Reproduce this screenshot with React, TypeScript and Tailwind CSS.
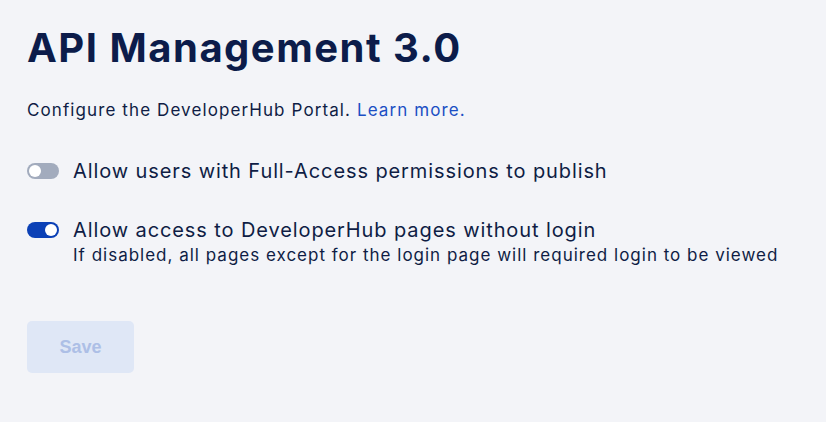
import React from "react";

function Toggle({ on }: { on: boolean }) {
  return (
    <div
      className={`relative h-4 w-8 shrink-0 rounded-full ${on ? "bg-[#0b40b6]" : "bg-[#a2abbd]"}`}
    >
      <div
        className={`absolute top-[2px] h-3 w-3 rounded-full bg-white ${on ? "left-[18px]" : "left-[2px]"}`}
      />
    </div>
  );
}

export default function App() {
  return (
    <div
      className="min-h-[422px] w-full bg-[#f3f4f8] pl-[27px] pt-[22px] text-[#0f1d45]"
      style={{ fontFamily: "Inter, 'Noto Sans', sans-serif" }}
    >
      <h1 className="text-[40px] font-bold leading-[52px] tracking-[1.5px] text-[#0c1c4a]">
        API Management 3.0
      </h1>
      <p className="mt-[24px] text-[17px] leading-[24px] tracking-[1.1px]">
        Configure the DeveloperHub Portal.{" "}
        <span className="text-[#1b4fc4]">Learn more.</span>
      </p>
      <div className="mt-[36px] flex items-center gap-[14px]">
        <Toggle on={false} />
        <span className="text-[20px] leading-[26px] tracking-[0.9px]">
          Allow users with Full-Access permissions to publish
        </span>
      </div>
      <div className="mt-[33px] flex items-start gap-[14px]">
        <div className="pt-[5px]">
          <Toggle on={true} />
        </div>
        <div>
          <div className="text-[20px] leading-[26px] tracking-[0.9px]">
            Allow access to DeveloperHub pages without login
          </div>
          <div className="text-[17px] leading-[24px] tracking-[1px]">
            If disabled, all pages except for the login page will required login to be viewed
          </div>
        </div>
      </div>
      <button
        className="mt-[54px] flex h-[52px] w-[107px] items-center justify-center rounded-[5px] bg-[#dfe7f6] text-[18px] font-bold text-[#adbfe6]"
        style={{ fontFamily: "'Liberation Sans', Arial, sans-serif" }}
      >
        Save
      </button>
    </div>
  );
}
